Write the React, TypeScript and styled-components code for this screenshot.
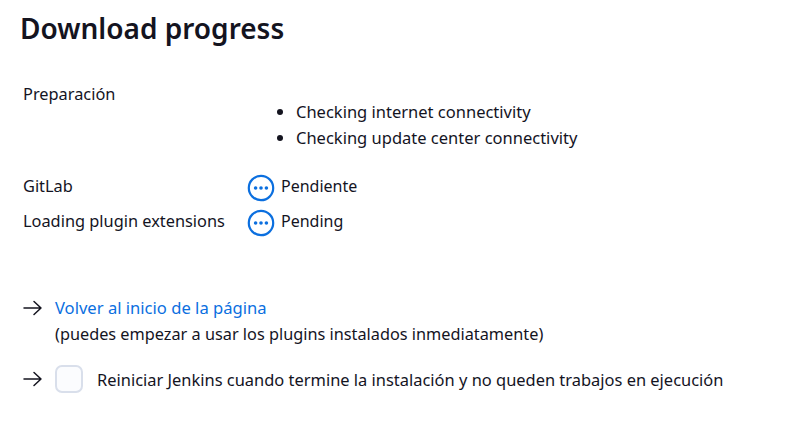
import styled, { createGlobalStyle } from 'styled-components'

const GlobalStyle = createGlobalStyle`
    html, body {
        margin: 0;
        padding: 0;
        background: #fff;
    }
    body {
        font-family: 'Noto Sans', 'Open Sans', 'Liberation Sans', sans-serif;
        font-size: 16.4px;
        color: #14141f;
    }
`

function PendingIcon() {
    return (
        <StatusSvg viewBox="0 0 28 28">
            <circle cx="14" cy="14" r="12.2" fill="none" stroke="#0b6fdf" strokeWidth="2.2" />
            <circle cx="8.6" cy="14" r="1.8" fill="#0b6fdf" />
            <circle cx="14" cy="14" r="1.8" fill="#0b6fdf" />
            <circle cx="19.4" cy="14" r="1.8" fill="#0b6fdf" />
        </StatusSvg>
    )
}

function ArrowIcon() {
    return (
        <ArrowSvg viewBox="0 0 20 16">
            <path
                d="M1 8h17M11 1.5 18 8l-7 6.5"
                fill="none"
                stroke="#14141f"
                strokeWidth="1.5"
                strokeLinecap="round"
                strokeLinejoin="round"
            />
        </ArrowSvg>
    )
}

export default function App() {
    return (
        <Page>
            <GlobalStyle />
            <Title>Download progress</Title>

            <Statuses>
                <Label>Preparación</Label>
                <Checks>
                    <li>Checking internet connectivity</li>
                    <li>Checking update center connectivity</li>
                </Checks>

                <StatusRow>
                    <Label>GitLab</Label>
                    <StatusCell>
                        <PendingIcon />
                        Pendiente
                    </StatusCell>
                </StatusRow>
                <StatusRow>
                    <Label>Loading plugin extensions</Label>
                    <StatusCell>
                        <PendingIcon />
                        Pending
                    </StatusCell>
                </StatusRow>
            </Statuses>

            <Links>
                <LinkRow>
                    <ArrowIcon />
                    <div>
                        <BackLink href="#">Volver al inicio de la página</BackLink>
                        <Hint>(puedes empezar a usar los plugins instalados inmediatamente)</Hint>
                    </div>
                </LinkRow>
                <RestartRow>
                    <ArrowIcon />
                    <CheckBox />
                    <RestartText>
                        Reiniciar Jenkins cuando termine la instalación y no queden trabajos en ejecución
                    </RestartText>
                </RestartRow>
            </Links>
        </Page>
    )
}

const Page = styled.div`
    width: 807px;
    height: 421px;
    box-sizing: border-box;
    padding: 9px 20px 0;
    overflow: hidden;
`

const Title = styled.h1`
    margin: 0;
    font-size: 28px;
    line-height: 38px;
    font-weight: 600;
`

const Statuses = styled.div`
    margin-top: 35px;
    padding-left: 3px;
`

const Label = styled.div`
    width: 224px;
    flex: none;
    line-height: 24px;
    font-size: 16.35px;
`

const Checks = styled.ul`
    margin: -7px 0 17px 225px;
    padding: 0 0 0 48px;
    line-height: 26px;
    font-size: 16.5px;
`

const StatusRow = styled.div`
    display: flex;
    align-items: center;
    height: 35px;
`

const StatusCell = styled.div`
    display: flex;
    align-items: center;
    gap: 6px;
    line-height: 24px;
    font-size: 16px;
`

const StatusSvg = styled.svg`
    width: 28px;
    height: 28px;
    margin-top: 5px;
`

const Links = styled.div`
    margin-top: 57px;
    padding-left: 3px;
`

const LinkRow = styled.div`
    display: flex;
    gap: 12px;
    line-height: 26px;
`

const ArrowSvg = styled.svg`
    width: 20px;
    height: 16px;
    flex: none;
    margin-top: 5px;
`

const BackLink = styled.a`
    color: #0b6fdf;
    text-decoration: none;
    font-size: 16.6px;
`

const Hint = styled.div`
    font-size: 16.3px;
`

const RestartRow = styled.div`
    display: flex;
    align-items: center;
    gap: 12px;
    margin-top: 18px;

    svg {
        margin-top: 0;
    }
`

const RestartText = styled.span`
    margin-left: 2px;
    font-size: 16.45px;
`

const CheckBox = styled.div`
    width: 28px;
    height: 28px;
    box-sizing: border-box;
    border: 2px solid #d9dfeb;
    border-radius: 7px;
    background: #fbfcfe;
    flex: none;
`
